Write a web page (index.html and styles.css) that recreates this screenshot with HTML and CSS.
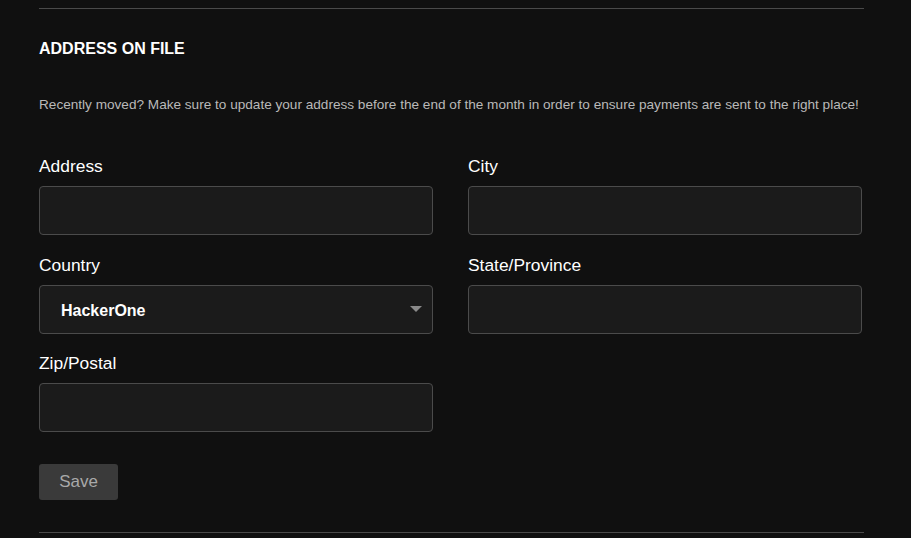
FILE: index.html
```html
<!DOCTYPE html>
<html>
<head>
<meta charset="utf-8">
<link rel="stylesheet" href="styles.css">
</head>
<body>
<div class="wrap">
  <div class="rule"></div>
  <section class="section">
    <h2 class="title">ADDRESS ON FILE</h2>
    <p class="desc">Recently moved? Make sure to update your address before the end of the month in order to ensure payments are sent to the right place!</p>
    <div class="grid">
      <div class="field">
        <label class="label">Address</label>
        <div class="input"></div>
      </div>
      <div class="field">
        <label class="label">City</label>
        <div class="input"></div>
      </div>
      <div class="field">
        <label class="label">Country</label>
        <div class="input select"><span class="sel-text">HackerOne</span><span class="caret"></span></div>
      </div>
      <div class="field">
        <label class="label">State/Province</label>
        <div class="input"></div>
      </div>
      <div class="field">
        <label class="label">Zip/Postal</label>
        <div class="input"></div>
      </div>
    </div>
    <button class="save">Save</button>
  </section>
  <div class="rule"></div>
</div>
</body>
</html>
```
FILE: styles.css
```css
html, body {
  margin: 0;
  padding: 0;
  background: #101010;
  font-family: "Liberation Sans", Arial, sans-serif;
  color: #fff;
}
.wrap {
  width: 825px;
  margin-left: 39px;
  padding-top: 8px;
}
.rule {
  height: 1px;
  background: #4a4a4a;
}
.section {
  padding-top: 31px;
  padding-bottom: 32px;
}
.title {
  margin: 0;
  font-size: 16px;
  font-weight: bold;
  line-height: 18px;
  color: #fff;
}
.desc {
  margin: 39px 0 0 0;
  font-size: 13.6px;
  line-height: 16px;
  color: #b9b9b9;
  white-space: nowrap;
}
.grid {
  display: grid;
  grid-template-columns: 394px 394px;
  column-gap: 35px;
  row-gap: 19.6px;
  margin-top: 43px;
}
.field {
  display: flex;
  flex-direction: column;
}
.label {
  font-size: 17.4px;
  line-height: 20px;
  color: #fff;
  margin-bottom: 10px;
}
.input {
  height: 47px;
  border: 1px solid #4b4b4b;
  border-radius: 4px;
  background: #1b1b1b;
  box-sizing: content-box;
}
.select {
  display: flex;
  align-items: center;
  justify-content: space-between;
  padding: 0 10px 0 21px;
  height: 47px;
}
.sel-text {
  font-size: 16px;
  font-weight: bold;
  color: #fff;
  padding-top: 4px;
}
.caret {
  width: 0;
  height: 0;
  border-left: 6px solid transparent;
  border-right: 6px solid transparent;
  border-top: 6px solid #8a8a8a;
}
.save {
  margin-top: 32px;
  width: 79px;
  height: 36px;
  border: none;
  border-radius: 3px;
  background: #3a3a3a;
  color: #a9a9a9;
  font-family: "Liberation Sans", Arial, sans-serif;
  font-size: 17px;
  padding: 0;
  display: block;
}
```
